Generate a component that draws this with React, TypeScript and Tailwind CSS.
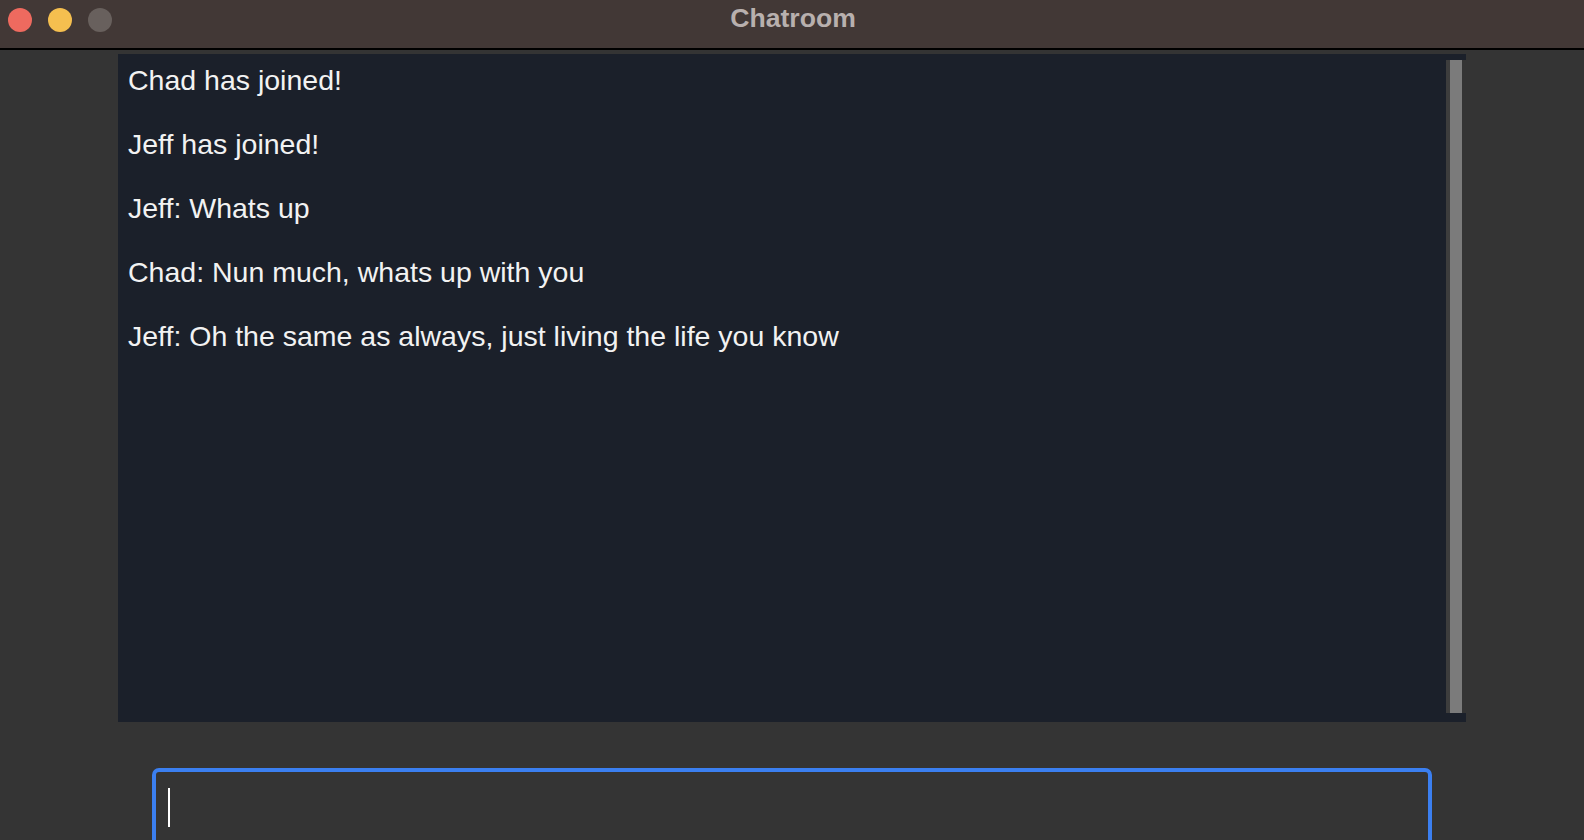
const messages = [
  'Chad has joined!',
  'Jeff has joined!',
  'Jeff: Whats up',
  'Chad: Nun much, whats up with you',
  'Jeff: Oh the same as always, just living the life you know',
];

export default function App() {
  return (
    <div className="h-[840px] w-full overflow-hidden bg-[#343434] flex flex-col font-['Liberation_Sans',Arial,sans-serif]">
      {/* Title bar */}
      <header className="relative h-[50px] shrink-0 bg-[#423836] border-b-2 border-black flex items-center justify-center">
        <div className="absolute left-[8px] top-[8px] flex gap-[16px]">
          <span className="w-[24px] h-[24px] rounded-full bg-[#ee6a5f]" />
          <span className="w-[24px] h-[24px] rounded-full bg-[#f5bf4f]" />
          <span className="w-[24px] h-[24px] rounded-full bg-[#68605d]" />
        </div>
        <h1 className="text-[26.6px] font-bold text-[#b8b0ae] -mt-[10px] ml-[2px]">Chatroom</h1>
      </header>

      {/* Chat log */}
      <div className="pt-[4px] pl-[118px]">
        <div className="w-[1348px] h-[668px] bg-[#1b202a] flex pt-[6px] pb-[9px]">
          <div className="flex-1 pl-[10px] -mt-[1px] flex flex-col gap-[22px] text-[28.5px] leading-[42px] text-[#f2f2f2]">
            {messages.map((m, i) => (
              <p key={i}>{m}</p>
            ))}
          </div>
          <div className="w-[20px] bg-[#343434] flex">
            <div className="w-[4px] bg-[#3d3d3d]" />
            <div className="w-[12px] bg-[#7b7b7b]" />
          </div>
        </div>
      </div>

      {/* Input */}
      <div className="pt-[46px] pl-[152px]">
        <div className="w-[1280px] h-[100px] rounded-[7px] border-[4px] border-[#3b7ff0] bg-[#343434] pl-[12px] pt-[16px]">
          <div className="w-[2px] h-[39px] bg-white" />
        </div>
      </div>
    </div>
  );
}
